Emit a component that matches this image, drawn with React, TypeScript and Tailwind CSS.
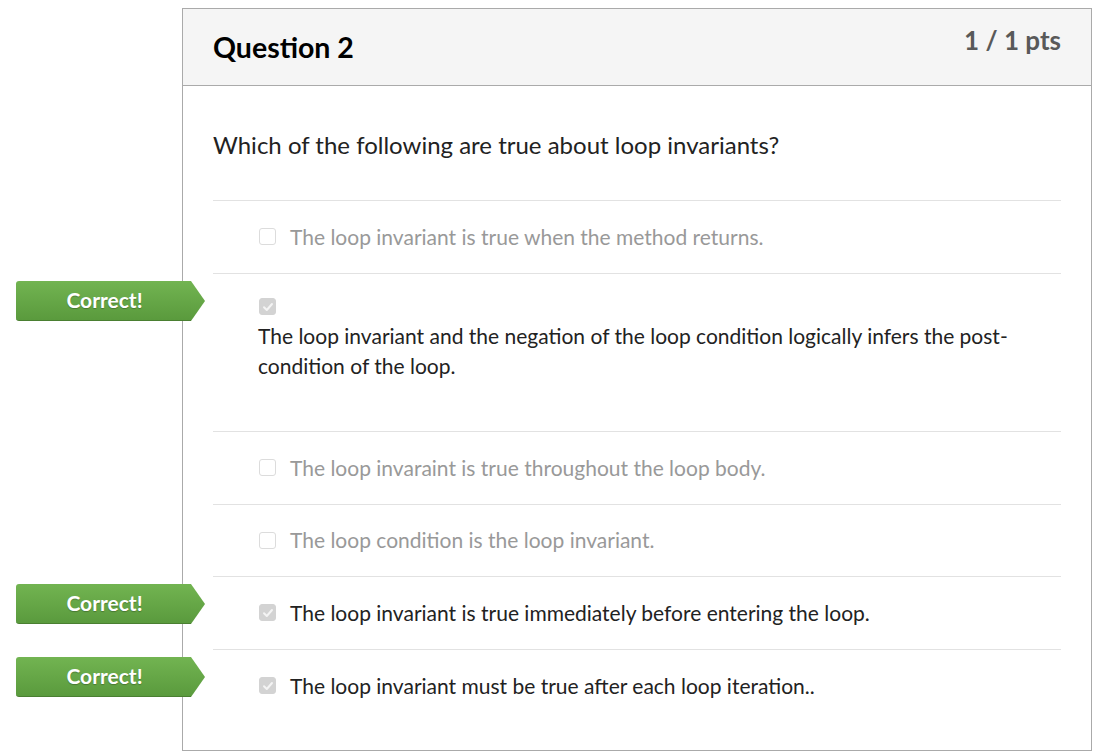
import React from "react";

type Ans = { text: string; checked: boolean; correct: boolean; tall?: boolean; h?: string };

const answers: Ans[] = [
  { text: "The loop invariant is true when the method returns.", checked: false, correct: false, h: "h-[72px]" },
  {
    text: "The loop invariant and the negation of the loop condition logically infers the post-condition of the loop.",
    checked: true,
    correct: true,
    tall: true,
  },
  { text: "The loop invaraint is true throughout the loop body.", checked: false, correct: false, h: "h-[72px]" },
  { text: "The loop condition is the loop invariant.", checked: false, correct: false, h: "h-[71px]" },
  { text: "The loop invariant is true immediately before entering the loop.", checked: true, correct: true, h: "h-[72px]" },
  { text: "The loop invariant must be true after each loop iteration..", checked: true, correct: true, h: "h-[72px]" },
];

function Badge() {
  return (
    <div className="absolute left-[-197px] top-[7px] h-[40px] w-[189px] flex">
      <div className="h-[40px] w-[175px] rounded-l-[3px] bg-gradient-to-b from-[#72b451] to-[#5a9a3d] border-b border-[#4a7f31] flex items-center justify-center">
        <span className="text-white font-bold text-[21px] leading-none [text-shadow:0_1px_1px_rgba(0,0,0,0.25)] pb-[3px] pl-[2px]">Correct!</span>
      </div>
      <svg width="14" height="40" viewBox="0 0 14 40" className="block">
        <defs>
          <linearGradient id="g" x1="0" y1="0" x2="0" y2="1">
            <stop offset="0" stopColor="#72b451" />
            <stop offset="1" stopColor="#5a9a3d" />
          </linearGradient>
        </defs>
        <polygon points="0,0 0,40 14,20" fill="url(#g)" />
      </svg>
    </div>
  );
}

function Box({ checked }: { checked: boolean }) {
  return (
    <div
      className={
        "w-[17px] h-[17px] rounded-[3px] border flex items-center justify-center shrink-0 " +
        (checked ? "bg-[#d3d3d3] border-[#d3d3d3]" : "bg-white border-[#dcdcdc]")
      }
    >
      {checked && (
        <svg width="12" height="12" viewBox="0 0 12 12">
          <path d="M2 6.2 L4.8 9 L10 3" stroke="#f4f4f4" strokeWidth="2" fill="none" strokeLinecap="round" strokeLinejoin="round" />
        </svg>
      )}
    </div>
  );
}

export default function App() {
  return (
    <div className="w-[1094px] h-[754px] bg-white pt-[8px] pl-[182px]" style={{ fontFamily: "Lato, 'Open Sans', sans-serif" }}>
      <div className="w-[910px] h-[743px] border border-[#aaaaaa] flex flex-col">
        <div className="h-[77px] bg-[#f5f5f5] border-b border-[#aaaaaa] flex justify-between px-[30px]">
          <div className="pt-[20px] text-[28.5px] font-bold text-black leading-[36px]">Question 2</div>
          <div className="pt-[17px] text-[26px] font-bold text-[#595959] leading-[28px]">1 / 1 pts</div>
        </div>
        <div className="px-[30px] pt-[44px]">
          <div className="text-[24px] text-[#222] leading-[30px] mb-[40px]">
            Which of the following are true about loop invariants?
          </div>
          <div className="flex flex-col">
            {answers.map((a, i) => (
              <div key={i} className="relative border-t border-[#e2e2e2]">
                {a.correct && <Badge />}
                {a.tall ? (
                  <div className="h-[157px] pl-[46px] pt-[24px]">
                    <Box checked={a.checked} />
                    <div className="mt-[6px] ml-[-1px] text-[21px] leading-[30px] text-[#222]">{a.text}</div>
                  </div>
                ) : (
                  <div className={a.h + " pl-[46px] flex items-center gap-[14px] pb-[1px]"}>
                    <Box checked={a.checked} />
                    <span className={"text-[21px] leading-[30px] " + (a.checked ? "text-[#222]" : "text-[#999]")}>{a.text}</span>
                  </div>
                )}
              </div>
            ))}
          </div>
        </div>
      </div>
    </div>
  );
}
